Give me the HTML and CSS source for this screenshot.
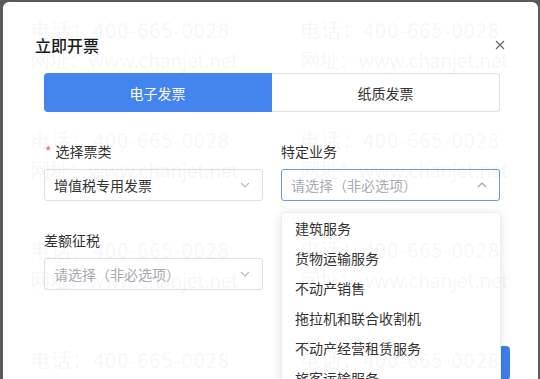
FILE: index.html
```html
<!DOCTYPE html>
<html lang="zh">
<head>
<meta charset="utf-8">
<title>立即开票</title>
<link rel="stylesheet" href="styles.css">
</head>
<body>
<div class="dialog">
  <div class="dialog-header">
    <span class="dialog-title">立即开票</span>
    <svg class="close" width="10" height="10" viewBox="0 0 10 10"><path d="M1 1L9 9M9 1L1 9" stroke="#666" stroke-width="1.2" fill="none"/></svg>
  </div>
  <div class="tabs">
    <div class="tab tab-active">电子发票</div>
    <div class="tab">纸质发票</div>
  </div>
  <div class="form-grid">
    <div class="field">
      <div class="label"><span class="req">*</span>选择票类</div>
      <div class="select">
        <span class="value">增值税专用发票</span>
        <svg class="chev" width="10" height="6" viewBox="0 0 10 6"><polyline points="1,1 5,5 9,1" stroke="#b8bcc4" stroke-width="1.1" fill="none"/></svg>
      </div>
    </div>
    <div class="field">
      <div class="label">特定业务</div>
      <div class="select select-open">
        <span class="placeholder">请选择（非必选项）</span>
        <svg class="chev" width="10" height="6" viewBox="0 0 10 6"><polyline points="1,5 5,1 9,5" stroke="#9aa0aa" stroke-width="1.1" fill="none"/></svg>
      </div>
      <ul class="dropdown">
        <li>建筑服务</li>
        <li>货物运输服务</li>
        <li>不动产销售</li>
        <li>拖拉机和联合收割机</li>
        <li>不动产经营租赁服务</li>
        <li>旅客运输服务</li>
      </ul>
    </div>
    <div class="field">
      <div class="label">差额征税</div>
      <div class="select">
        <span class="placeholder">请选择（非必选项）</span>
        <svg class="chev" width="10" height="6" viewBox="0 0 10 6"><polyline points="1,1 5,5 9,1" stroke="#b8bcc4" stroke-width="1.1" fill="none"/></svg>
      </div>
    </div>
  </div>
  <div class="footer">
    <button class="btn-primary">确定</button>
  </div>
</div>
<div class="watermark">
  <div class="wm"><div class="wm-tel">电话：400-665-0028</div><div class="wm-url">网址：www.chanjet.net</div></div>
  <div class="wm"><div class="wm-tel">电话：400-665-0028</div><div class="wm-url">网址：www.chanjet.net</div></div>
  <div class="wm"><div class="wm-tel">电话：400-665-0028</div><div class="wm-url">网址：www.chanjet.net</div></div>
  <div class="wm"><div class="wm-tel">电话：400-665-0028</div><div class="wm-url">网址：www.chanjet.net</div></div>
  <div class="wm"><div class="wm-tel">电话：400-665-0028</div><div class="wm-url">网址：www.chanjet.net</div></div>
  <div class="wm"><div class="wm-tel">电话：400-665-0028</div><div class="wm-url">网址：www.chanjet.net</div></div>
  <div class="wm"><div class="wm-tel">电话：400-665-0028</div><div class="wm-url">网址：www.chanjet.net</div></div>
  <div class="wm"><div class="wm-tel">电话：400-665-0028</div><div class="wm-url">网址：www.chanjet.net</div></div>
</div>
</body>
</html>
```
FILE: styles.css
```css
html, body {
  margin: 0;
  padding: 0;
  height: 379px;
  overflow: hidden;
}
body {
  background: #5a5a5a;
  font-family: "Noto Sans CJK SC", "Noto Sans", sans-serif;
  font-size: 14px;
  color: #333;
  position: relative;
}
.dialog {
  margin: 2px 0 0 3px;
  width: 535px;
  height: 440px;
  box-sizing: border-box;
  background: #fff;
  border-radius: 6px;
  padding: 31px 38px 0 41px;
}
.dialog-header {
  display: flex;
  align-items: center;
  justify-content: space-between;
  margin: 0 -5px 0 -9px;
  height: 24px;
}
.dialog-title {
  font-size: 16px;
  line-height: 24px;
  font-weight: 500;
  color: #1a1a1a;
}
.close {
  display: block;
  margin-top: 0;
}
.tabs {
  display: flex;
  margin-top: 16px;
  height: 39px;
}
.tab {
  flex: 1;
  display: flex;
  align-items: center;
  justify-content: center;
  border: 1px solid #dcdfe6;
  border-left: none;
  border-radius: 0 4px 4px 0;
  color: #333;
}
.tab-active {
  background: #4384ef;
  border-color: #4384ef;
  border-radius: 4px 0 0 4px;
  color: #fff;
}
.form-grid {
  display: grid;
  grid-template-columns: 219px 219px;
  column-gap: 18px;
  row-gap: 29px;
  margin-top: 29px;
}
.field {
  position: relative;
}
.label {
  line-height: 20px;
  height: 20px;
  margin-bottom: 8px;
  color: #333;
}
.req {
  color: #f56c6c;
  margin: 0 4px 0 1px;
}
.select {
  height: 32px;
  box-sizing: border-box;
  border: 1px solid #dcdfe6;
  border-radius: 3px;
  display: flex;
  align-items: center;
  justify-content: space-between;
  padding: 0 12px 0 9px;
}
.select-open {
  border-color: #6f9ad6;
}
.value {
  color: #333;
}
.placeholder {
  color: #a8abb2;
}
.chev {
  display: block;
}
.dropdown {
  position: absolute;
  left: 0;
  top: calc(100% + 11px);
  width: 220px;
  box-sizing: border-box;
  margin: 0;
  padding: 0;
  list-style: none;
  background: #fff;
  border: 1px solid #eceef2;
  border-radius: 4px;
  box-shadow: 0 2px 12px rgba(0, 0, 0, 0.1);
  z-index: 2;
}
.dropdown li {
  line-height: 30px;
  height: 30px;
  padding-left: 13px;
  color: #333;
  white-space: nowrap;
}
.footer {
  display: flex;
  justify-content: flex-end;
  margin-top: 56px;
  margin-right: -10px;
}
.btn-primary {
  width: 80px;
  height: 34px;
  border: none;
  border-radius: 4px;
  background: #3e7fe8;
  color: #fff;
  font-family: inherit;
  font-size: 14px;
}
.watermark {
  position: absolute;
  left: 0;
  top: 0;
  width: 540px;
  height: 379px;
  overflow: hidden;
  pointer-events: none;
  z-index: 5;
  display: grid;
  grid-template-columns: 270px 270px;
  grid-auto-rows: 110px;
  padding: 15px 0 0 30px;
  box-sizing: border-box;
}
.wm {
  font-family: "Noto Sans CJK SC", "Noto Sans", sans-serif;
  font-size: 20px;
  line-height: 30px;
  color: rgba(0, 0, 0, 0.055);
  white-space: nowrap;
}
.wm-tel {
  letter-spacing: 1px;
}
.wm-url {
  letter-spacing: -0.6px;
}
```
